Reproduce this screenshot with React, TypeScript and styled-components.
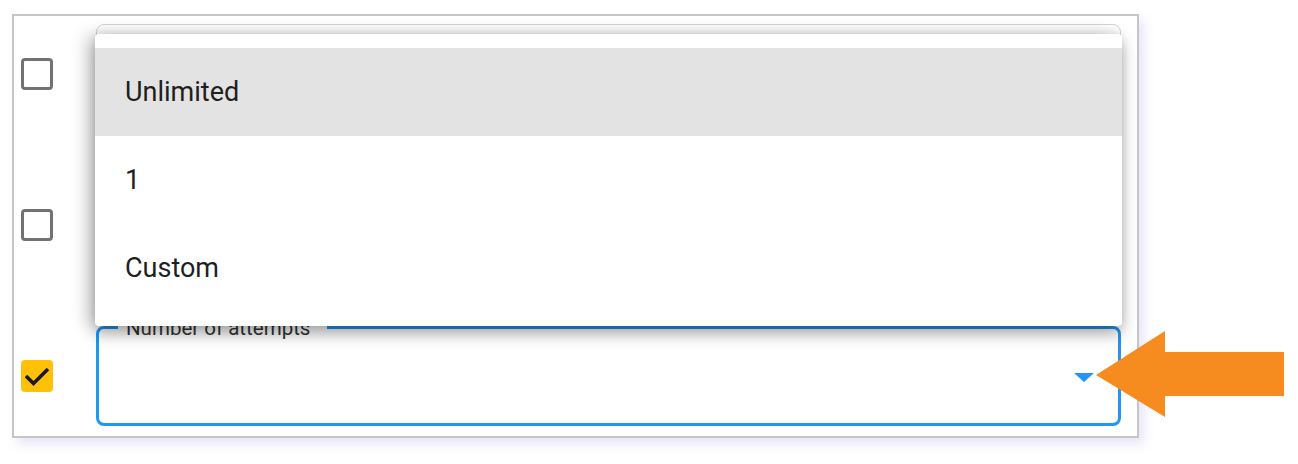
import styled, { createGlobalStyle } from "styled-components";

const GlobalStyle = createGlobalStyle`
  html, body {
    margin: 0;
    padding: 0;
    background: #ffffff;
    font-family: Roboto, "Liberation Sans", sans-serif;
  }
`;

const Page = styled.div`
  position: relative;
  width: 1298px;
  height: 464px;
  padding: 14px 0 0 12px;
  box-sizing: border-box;
`;

const Frame = styled.div`
  position: relative;
  width: 1127px;
  height: 424px;
  box-sizing: border-box;
  border: 2px solid #c6c6c6;
  background: #ffffff;
  box-shadow: 5px 6px 10px rgba(120, 110, 220, 0.18);
  padding: 8px 16px 0 7px;
  display: flex;
  flex-direction: column;
  gap: 51px;
`;

const Row = styled.div`
  display: flex;
  align-items: center;
  gap: 43px;
  height: 100px;
`;

const Box = styled.div<{ $checked?: boolean }>`
  width: 32px;
  height: 32px;
  box-sizing: border-box;
  border-radius: 4px;
  flex: none;
  display: flex;
  align-items: center;
  justify-content: center;
  border: ${(p) => (p.$checked ? "none" : "3px solid #727272")};
  background: ${(p) => (p.$checked ? "#ffc107" : "#ffffff")};
`;

const Field = styled.div<{ $focused?: boolean }>`
  position: relative;
  flex: 1;
  height: 100px;
  box-sizing: border-box;
  border-radius: 8px;
  border: ${(p) => (p.$focused ? "3px solid #2196f3" : "1px solid #d4d4d4")};
  background: #ffffff;
`;

const Label = styled.span`
  position: absolute;
  left: 19px;
  top: -13px;
  padding: 0 17px 0 8px;
  background: #ffffff;
  font-size: 20.5px;
  line-height: 24px;
  color: #333333;
`;

const Caret = styled.div`
  position: absolute;
  right: 24px;
  top: 44px;
  width: 0;
  height: 0;
  border-left: 10px solid transparent;
  border-right: 10px solid transparent;
  border-top: 9px solid #2196f3;
`;

const Menu = styled.ul`
  position: absolute;
  left: 81px;
  top: 18px;
  width: 1027px;
  margin: 0;
  padding: 14px 0;
  list-style: none;
  background: #ffffff;
  border-radius: 4px;
  box-shadow: 0 8px 16px rgba(0, 0, 0, 0.3), 0 -2px 10px rgba(0, 0, 0, 0.08),
    -10px 0 18px rgba(0, 0, 0, 0.14);
  z-index: 2;
`;

const Option = styled.li<{ $active?: boolean }>`
  height: 88px;
  display: flex;
  align-items: center;
  padding-left: 30px;
  font-size: 27px;
  color: #1f1f1f;
  background: ${(p) => (p.$active ? "#e3e3e3" : "#ffffff")};
`;

const Pointer = styled.svg`
  position: absolute;
  left: 1096px;
  top: 331px;
  z-index: 3;
`;

const Check = () => (
  <svg width="28" height="24" viewBox="0 0 28 24">
    <path d="M3 12 L10.5 19.5 L25 5" fill="none" stroke="#1a1a1a" strokeWidth="3.6" />
  </svg>
);

const options = ["Unlimited", "1", "Custom"];

export default function App() {
  return (
    <>
      <GlobalStyle />
      <Page>
        <Frame>
          <Row>
            <Box />
            <Field />
          </Row>
          <Row>
            <Box />
            <Field />
          </Row>
          <Row>
            <Box $checked>
              <Check />
            </Box>
            <Field $focused>
              <Label>Number of attempts</Label>
              <Caret />
            </Field>
          </Row>
          <Menu>
            {options.map((o, i) => (
              <Option key={o} $active={i === 0}>
                {o}
              </Option>
            ))}
          </Menu>
        </Frame>
        <Pointer width="190" height="88" viewBox="0 0 190 88">
          <polygon points="0,44 69,0 69,21 188,21 188,65 69,65 69,86" fill="#f68b20" />
        </Pointer>
      </Page>
    </>
  );
}
